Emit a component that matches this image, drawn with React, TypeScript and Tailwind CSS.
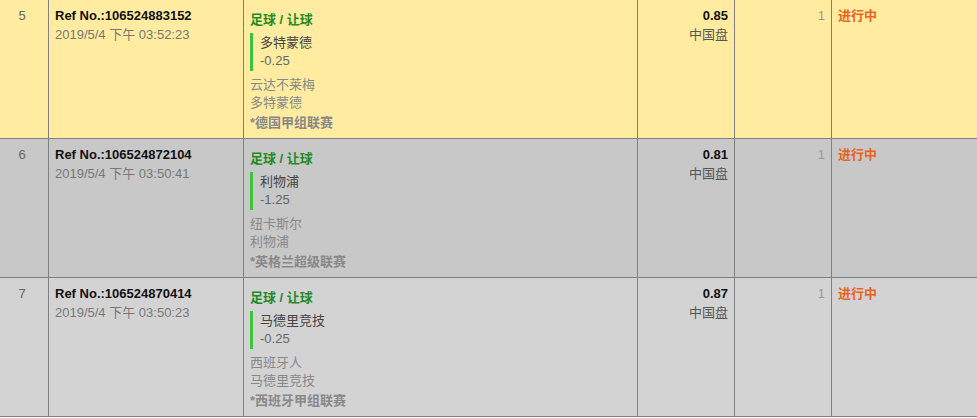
import React from 'react';

interface Bet {
  idx: number;
  ref: string;
  time: string;
  pick: string;
  hdp: string;
  home: string;
  away: string;
  league: string;
  odds: string;
  oddsType: string;
  stake: string;
  status: string;
  bg: string;
}

const bets: Bet[] = [
  { idx: 5, ref: '106524883152', time: '2019/5/4 下午 03:52:23', pick: '多特蒙德', hdp: '-0.25', home: '云达不莱梅', away: '多特蒙德', league: '德国甲组联赛', odds: '0.85', oddsType: '中国盘', stake: '1', status: '进行中', bg: 'bg-[#ffeca0]' },
  { idx: 6, ref: '106524872104', time: '2019/5/4 下午 03:50:41', pick: '利物浦', hdp: '-1.25', home: '纽卡斯尔', away: '利物浦', league: '英格兰超级联赛', odds: '0.81', oddsType: '中国盘', stake: '1', status: '进行中', bg: 'bg-[#c8c8c8]' },
  { idx: 7, ref: '106524870414', time: '2019/5/4 下午 03:50:23', pick: '马德里竞技', hdp: '-0.25', home: '西班牙人', away: '马德里竞技', league: '西班牙甲组联赛', odds: '0.87', oddsType: '中国盘', stake: '1', status: '进行中', bg: 'bg-[#d4d3d4]' },
];

const cell = 'border-r border-[#808080] pt-[6px] leading-[19px]';

export default function App() {
  return (
    <div className="w-[977px] h-[418px] overflow-hidden bg-white text-[13px] font-['Liberation_Sans','Noto_Sans_CJK_SC',sans-serif]">
      {bets.map((b) => (
        <div
          key={b.idx}
          className={`grid grid-cols-[49px_195px_394px_97px_97px_1fr] h-[139px] border-b border-[#808080] ${b.bg}`}
        >
          <div className={`${cell} pr-[4px] text-center text-[#666]`}>{b.idx}</div>
          <div className={`${cell} pl-[6px]`}>
            <div className="font-bold text-[#111]">Ref No.:{b.ref}</div>
            <div className="text-[#777]">{b.time}</div>
          </div>
          <div className="border-r border-[#808080] pl-[6px] pt-[11px] leading-[18px]">
            <div className="font-bold text-[#1f8a1f]">足球 / 让球</div>
            <div className="mt-[4px] py-[1px] border-l-[3px] border-[#3cc43c] pl-[7px] text-[#444]">
              <div>{b.pick}</div>
              <div className="text-[#666]">{b.hdp}</div>
            </div>
            <div className="mt-[5px] text-[#888]">{b.home}</div>
            <div className="text-[#888]">{b.away}</div>
            <div className="mt-[2px] font-bold text-[#888]">*{b.league}</div>
          </div>
          <div className={`${cell} pr-[6px] text-right`}>
            <div className="font-bold text-[#111]">{b.odds}</div>
            <div className="text-[#555]">{b.oddsType}</div>
          </div>
          <div className={`${cell} pr-[6px] text-right text-[#999]`}>{b.stake}</div>
          <div className="pt-[6px] pl-[6px] leading-[19px] font-bold text-[#e8641e]">{b.status}</div>
        </div>
      ))}
    </div>
  );
}
